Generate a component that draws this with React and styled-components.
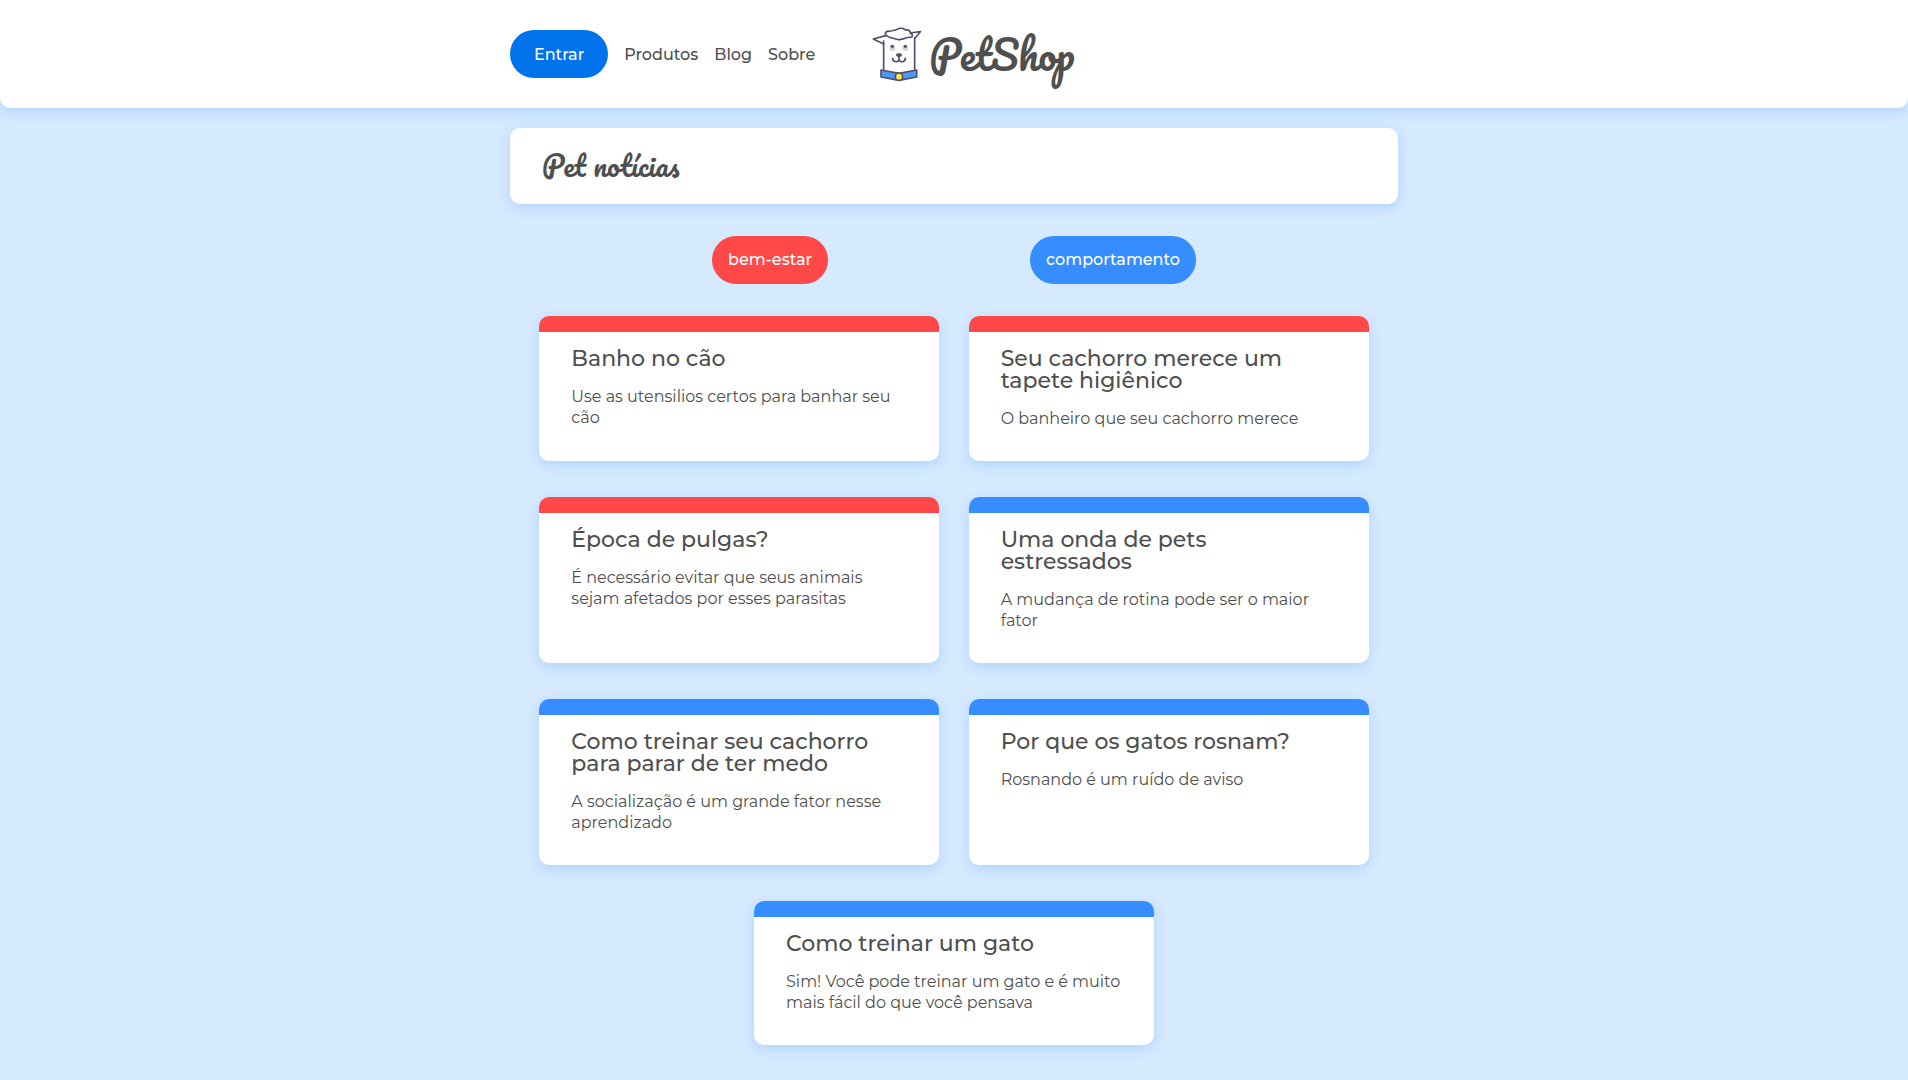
import React from "react";
import styled, { createGlobalStyle } from "styled-components";

const ink = "#4f4f4f";
const red = "#ff4949";
const blue = "#358dff";
const shadow = "0 4px 12px rgba(53, 141, 255, 0.22)";
const script = '"Pacifico", "Lato", cursive';

const GlobalStyle = createGlobalStyle`
  *, *::before, *::after { box-sizing: border-box; }
  body {
    margin: 0;
    background: #d5e9ff;
    color: ${ink};
    font: 400 16px/21px "Montserrat", "Inter", sans-serif;
  }
  h1, h2, p { margin: 0; }
  a { color: inherit; text-decoration: none; }
`;

const Header = styled.header`
  padding: 18px 16px;
  background: #fff;
  border-radius: 0 0 10px 10px;
  box-shadow: ${shadow};
`;

const Container = styled.div`
  max-width: 888px;
  margin: 0 auto;
`;

const HeaderRow = styled(Container)`
  display: flex;
  align-items: center;
  gap: 57px;
  min-height: 72px;
`;

const Nav = styled.nav`
  display: flex;
  align-items: center;
  gap: 16px;
  font-weight: 500;
`;

const EnterButton = styled.button`
  height: 48px;
  padding: 0 24px;
  border: 0;
  border-radius: 24px;
  background: #0072eb;
  color: #fff;
  font: inherit;
  cursor: pointer;
`;

const Brand = styled.a`
  display: flex;
  align-items: center;
  gap: 7px;
  font: 400 40px/72px ${script};
`;

const Main = styled.main`
  padding: 20px 16px 32px;
`;

const TitleBox = styled.div`
  padding: 18px 32px;
  border-radius: 10px;
  background: #fff;
  box-shadow: ${shadow};
`;

const PageTitle = styled.h1`
  font: 400 28px/40px ${script};
`;

const Tags = styled.div`
  display: flex;
  justify-content: space-evenly;
  margin: 32px 0;
`;

const Tag = styled.a`
  padding: 0 16px;
  border-radius: 24px;
  background: ${(p) => p.$color};
  color: #fff;
  font-weight: 500;
  line-height: 48px;
`;

const Cards = styled.section`
  display: flex;
  flex-wrap: wrap;
  justify-content: space-evenly;
  row-gap: 36px;
`;

const Card = styled.a`
  width: 400px;
  max-width: 100%;
  padding: 16px 32px 32px;
  border-radius: 10px;
  background: #fff;
  box-shadow: ${shadow};
  overflow: hidden;

  &::before {
    content: "";
    display: block;
    height: 16px;
    margin: -16px -32px 16px;
    background: ${(p) => p.$color};
  }
`;

const CardTitle = styled.h2`
  margin-bottom: 16px;
  font-size: 22px;
  font-weight: 500;
  line-height: 22px;
`;

const colors = { bem: red, comp: blue };

const tags = [
  { id: "bem", label: "bem-estar" },
  { id: "comp", label: "comportamento" },
];

const posts = [
  { tag: "bem", title: "Banho no cão", text: "Use as utensilios certos para banhar seu cão" },
  { tag: "bem", title: "Seu cachorro merece um tapete higiênico", text: "O banheiro que seu cachorro merece" },
  { tag: "bem", title: "Época de pulgas?", text: "É necessário evitar que seus animais sejam afetados por esses parasitas" },
  { tag: "comp", title: "Uma onda de pets estressados", text: "A mudança de rotina pode ser o maior fator" },
  { tag: "comp", title: "Como treinar seu cachorro para parar de ter medo", text: "A socialização é um grande fator nesse aprendizado" },
  { tag: "comp", title: "Por que os gatos rosnam?", text: "Rosnando é um ruído de aviso" },
  { tag: "comp", title: "Como treinar um gato", text: "Sim! Você pode treinar um gato e é muito mais fácil do que você pensava" },
];

function DogLogo() {
  return (
    <svg width="50" height="56" viewBox="37 32 150 168" fill="none" stroke="#50506b" strokeWidth="5" strokeLinejoin="round" strokeLinecap="round" aria-hidden="true">
      <path d="M78 61 41 71 72 86" />
      <path d="M151 53 182 49 166 69" />
      <path d="M72 77V165M165 67V165" />
      <path d="M79 60C74 50 82 46 91 48 98 45 106 46 112 42 120 37 132 38 137 44 146 42 153 47 152 54 161 57 160 66 151 66 143 64 137 71 124 72 111 75 105 70 98 68 88 69 84 61 79 60Z" fill="#fff" />
      <g stroke="none">
        <circle cx="98" cy="98" r="9" fill="#d5d5d8" />
        <circle cx="137" cy="98" r="9" fill="#d5d5d8" />
        <circle cx="98" cy="93" r="5" fill="#50506b" />
        <circle cx="137" cy="93" r="5" fill="#50506b" />
        <path d="M109 118C109 112 127 112 127 118 127 122 121 125 118 125S109 122 109 118Z" fill="#50506b" />
      </g>
      <path d="M118 123V132M99 129C99 142 116 142 118 132 120 142 137 142 137 129" />
      <path d="M64 164 118 174 171 164V185L118 195 64 185Z" fill="#4b9cf8" />
      <circle cx="118" cy="184" r="11" fill="#ffe847" />
    </svg>
  );
}

export default function App() {
  return (
    <>
      <GlobalStyle />
      <Header>
        <HeaderRow>
          <Nav aria-label="Principal">
            <EnterButton type="button">Entrar</EnterButton>
            <a href="#produtos">Produtos</a>
            <a href="#blog">Blog</a>
            <a href="#sobre">Sobre</a>
          </Nav>
          <Brand href="#inicio">
            <DogLogo />
            <span>PetShop</span>
          </Brand>
        </HeaderRow>
      </Header>
      <Main>
        <Container>
          <TitleBox>
            <PageTitle>Pet notícias</PageTitle>
          </TitleBox>
          <Tags>
            {tags.map((tag) => (
              <Tag key={tag.id} href={`#${tag.id}`} $color={colors[tag.id]}>
                {tag.label}
              </Tag>
            ))}
          </Tags>
          <Cards>
            {posts.map((post, i) => (
              <Card key={post.title} href={`#post-${i + 1}`} $color={colors[post.tag]}>
                <CardTitle>{post.title}</CardTitle>
                <p>{post.text}</p>
              </Card>
            ))}
          </Cards>
        </Container>
      </Main>
    </>
  );
}
